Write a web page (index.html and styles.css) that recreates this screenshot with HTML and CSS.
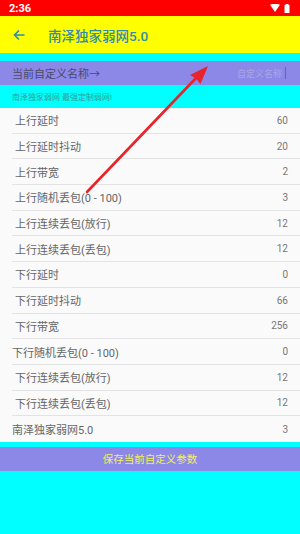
FILE: index.html
```html
<!DOCTYPE html>
<html lang="zh">
<head>
<meta charset="utf-8">
<link rel="stylesheet" href="styles.css">
</head>
<body>
<div class="screen">
  <div class="status">
    <span class="time">2:36</span>
    <span class="sicons">
      <svg width="10" height="8" viewBox="0 0 10 8"><path d="M0 0.8 Q5 -1.2 10 0.8 L5 8 Z" fill="#fff"/></svg>
      <svg width="6" height="9" viewBox="0 0 6 9"><rect x="1.5" y="0" width="3" height="1.2" fill="#fff"/><rect x="0.5" y="1" width="5" height="8" fill="#fff"/></svg>
    </span>
  </div>
  <div class="toolbar">
    <svg class="back" width="12" height="12" viewBox="0 0 12 12"><path d="M11.5 6H1.5M6 1.5L1.5 6L6 10.5" stroke="#2f8ca8" stroke-width="1.6" fill="none"/></svg>
    <span class="title">南泽独家弱网5.0</span>
  </div>
  <div class="gap"></div>
  <div class="namebar">
    <span class="namelabel">当前自定义名称→</span>
    <span class="hint">自定义名称<span class="cursor"></span></span>
  </div>
  <div class="slogan">南泽独家弱网 最强定制弱网!</div>
  <div class="list">
    <div class="row"><span>上行延时</span><span class="val">60</span></div>
    <div class="row"><span>上行延时抖动</span><span class="val">20</span></div>
    <div class="row"><span>上行带宽</span><span class="val">2</span></div>
    <div class="row"><span>上行随机丢包(0 - 100)</span><span class="val">3</span></div>
    <div class="row"><span>上行连续丢包(放行)</span><span class="val">12</span></div>
    <div class="row"><span>上行连续丢包(丢包)</span><span class="val">12</span></div>
    <div class="row"><span>下行延时</span><span class="val">0</span></div>
    <div class="row"><span>下行延时抖动</span><span class="val">66</span></div>
    <div class="row"><span>下行带宽</span><span class="val">256</span></div>
    <div class="row shift"><span>下行随机丢包(0 - 100)</span><span class="val">0</span></div>
    <div class="row"><span>下行连续丢包(放行)</span><span class="val">12</span></div>
    <div class="row"><span>下行连续丢包(丢包)</span><span class="val">12</span></div>
    <div class="row shift last"><span>南泽独家弱网5.0</span><span class="val">3</span></div>
  </div>
  <div class="gap2"></div>
  <div class="savebtn">保存当前自定义参数</div>
  <svg class="annot" width="300" height="534" viewBox="0 0 300 534">
    <line x1="87" y1="192" x2="197" y2="77" stroke="#e8232a" stroke-width="2.6" stroke-linecap="round"/>
    <path d="M208 66 L200.5 84 L196 78.5 L190 75 Z" fill="#e8232a"/>
  </svg>
</div>
</body>
</html>
```
FILE: styles.css
```css
* { box-sizing: border-box; }
html, body { margin: 0; padding: 0; }
body {
  background: #00ffff;
  font-family: Roboto, "Noto Sans CJK SC", "Noto Sans", sans-serif;
}
.screen {
  position: relative;
  width: 300px;
  height: 534px;
  overflow: hidden;
  background: #00ffff;
}
.status {
  height: 16px;
  background: #ff0000;
  display: flex;
  align-items: center;
  justify-content: space-between;
  padding: 0 10px 0 9px;
}
.time {
  color: #fff;
  font-size: 11px;
  font-weight: 700;
}
.sicons {
  display: flex;
  align-items: center;
  gap: 4px;
}
.sicons svg { display: block; }
.toolbar {
  height: 37px;
  background: #ffff00;
  display: flex;
  align-items: center;
  padding-left: 13px;
}
.back { display: block; }
.title {
  margin-left: 23px;
  font-size: 13.5px;
  font-weight: 500;
  color: #2f8ca8;
}
.gap { height: 8px; }
.namebar {
  height: 24px;
  background: #8c88e8;
  display: flex;
  align-items: center;
  justify-content: space-between;
  padding: 0 14px 0 12px;
}
.namelabel {
  font-size: 11px;
  color: #4a4a6a;
}
.hint {
  display: flex;
  align-items: center;
  font-size: 9px;
  color: #a9a6e6;
}
.cursor {
  display: inline-block;
  width: 1px;
  height: 12px;
  margin-left: 3px;
  background: #d6338a;
}
.slogan {
  height: 23px;
  display: flex;
  align-items: center;
  padding-left: 12px;
  font-size: 8px;
  color: #3a9a9a;
}
.list {
  background: #fafafa;
}
.row {
  height: 25.7px;
  margin-left: 12px;
  padding: 0 12px 0 3px;
  display: flex;
  align-items: center;
  justify-content: space-between;
  border-bottom: 1px solid #e3e3e3;
  font-size: 11px;
  color: #666;
}
.row.shift { padding-left: 0; }
.row.last { border-bottom: none; }
.val {
  font-size: 10px;
  color: #777;
}
.gap2 { height: 5px; }
.savebtn {
  height: 24px;
  background: #8c88e8;
  display: flex;
  align-items: center;
  justify-content: center;
  font-size: 10.5px;
  color: #f2f05a;
}
.annot {
  position: absolute;
  top: 0;
  left: 0;
  pointer-events: none;
}
```
